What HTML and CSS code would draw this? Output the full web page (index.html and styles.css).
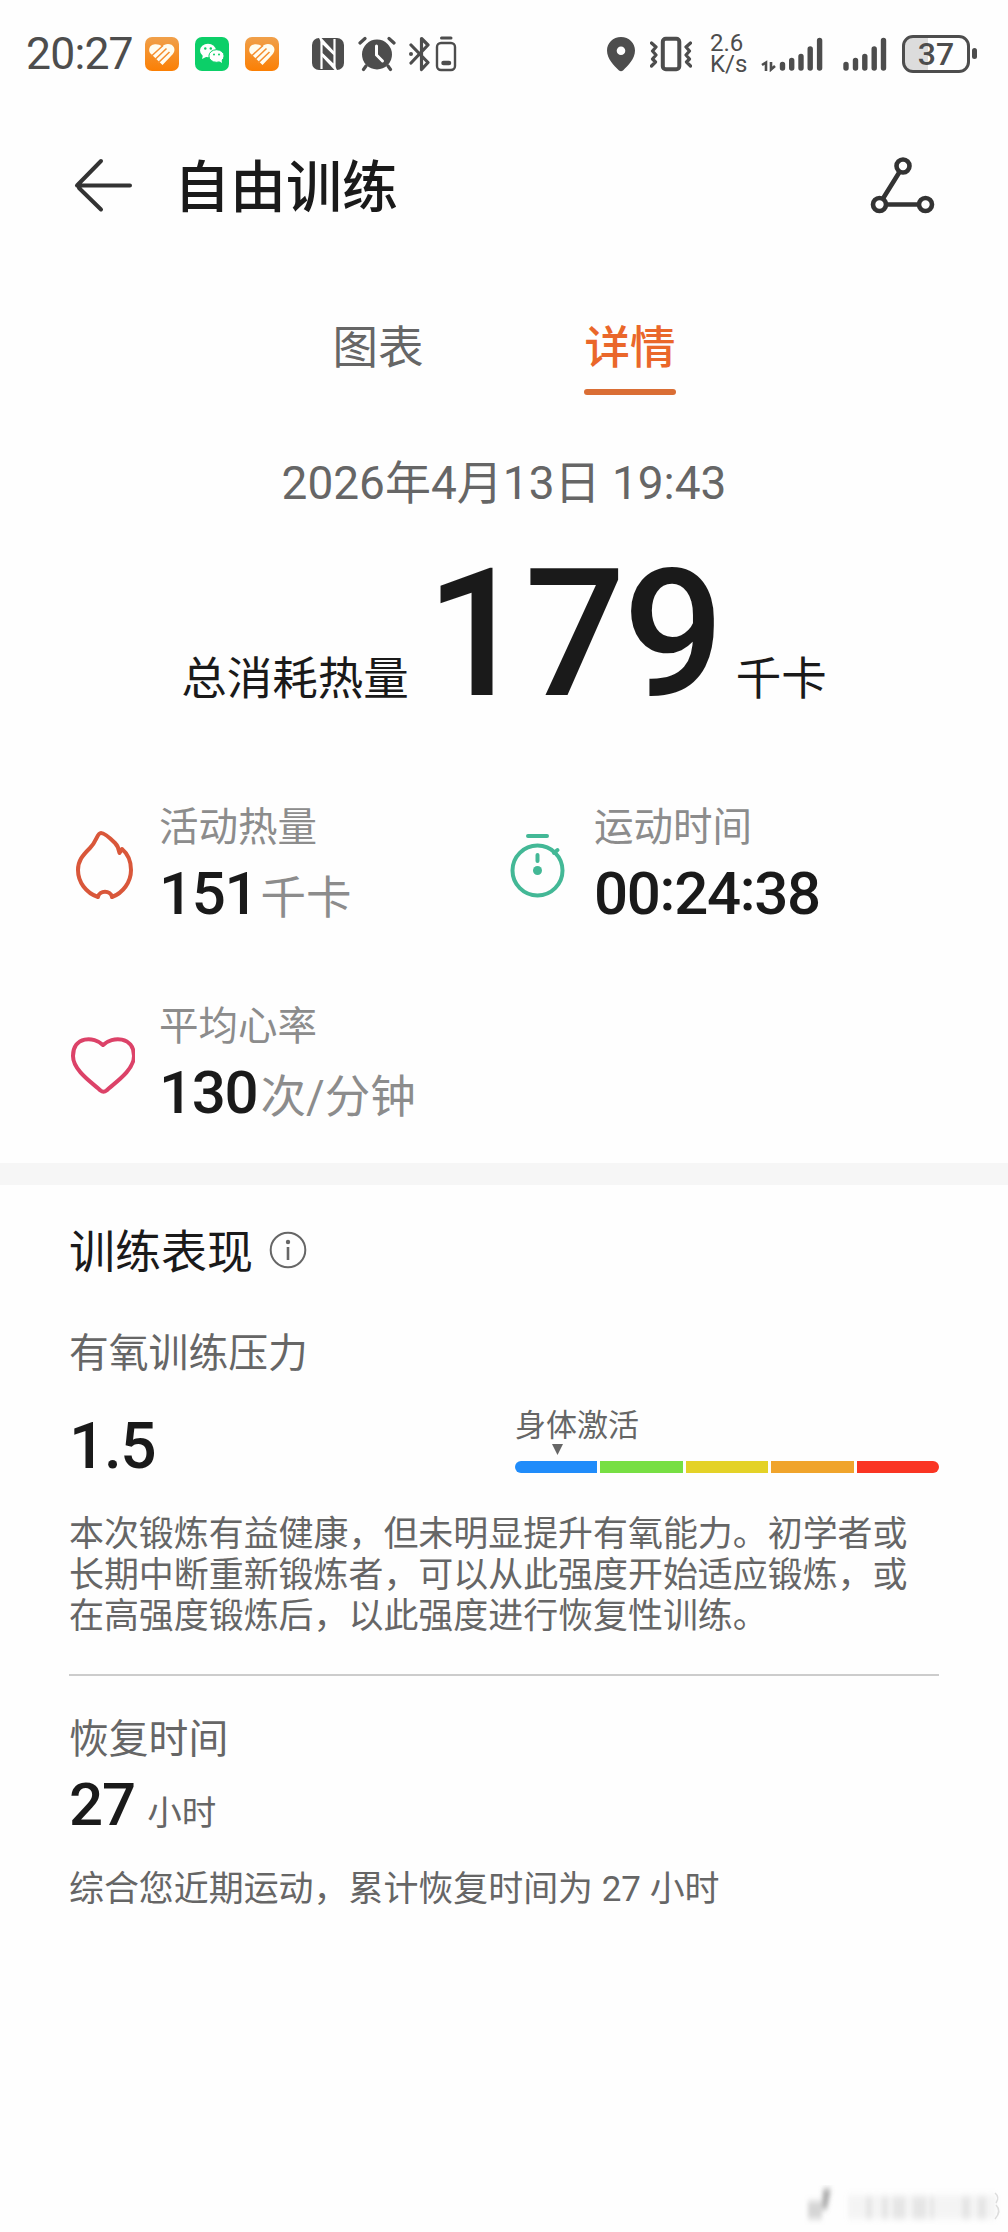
FILE: index.html
```
<!DOCTYPE html>
<html lang="zh-CN">
<head>
    <title>自由训练</title>
    <meta charset="utf-8">
    <link rel="stylesheet" href="styles.css">
</head>
<body>
<div class="statusbar">
    <div class="status-left">
        <span class="clock">20:27</span>
        <svg class="app-icon" width="34" height="34" viewBox="0 0 34 34">
            <defs><linearGradient id="orange" x1="0" y1="0" x2="0" y2="1"><stop offset="0" stop-color="#f0a04a"/><stop offset="1" stop-color="#fb7f04"/></linearGradient></defs>
            <rect width="34" height="34" rx="7" fill="url(#orange)"/>
            <path d="M17 9.500C20 6 27 6 29 10.500C30.500 14.500 28 17 26 19L17.500 28L5 16C3 12 5 8 9 7.500C12.500 7 15 8 17 9.500Z" fill="#fffdf0"/>
            <path d="M6 19.500L18 8.500M10 22.500L21.500 11.500M13 26L24.500 15" fill="none" stroke="#f59030" stroke-width="1.600"/>
        </svg>
        <svg class="app-icon" width="34" height="34" viewBox="0 0 34 34">
            <rect width="34" height="34" rx="7" fill="#0ccf68"/>
            <ellipse cx="13" cy="13.500" rx="8" ry="6.800" fill="#fff"/><path d="M8 18L7 22L12 19.500Z" fill="#fff"/>
            <ellipse cx="21.500" cy="19" rx="7.600" ry="6.300" fill="#fff" stroke="#0ccf68" stroke-width="1"/><path d="M24 24L27 26L26.500 22Z" fill="#fff"/>
            <g fill="#0ccf68"><circle cx="10.300" cy="11.500" r="1.200"/><circle cx="15.800" cy="11.500" r="1.200"/><circle cx="19" cy="17.500" r="1"/><circle cx="24" cy="17.500" r="1"/></g>
        </svg>
        <svg class="app-icon" width="34" height="34" viewBox="0 0 34 34">
            <rect width="34" height="34" rx="7" fill="url(#orange)"/>
            <path d="M17 9.500C20 6 27 6 29 10.500C30.500 14.500 28 17 26 19L17.500 28L5 16C3 12 5 8 9 7.500C12.500 7 15 8 17 9.500Z" fill="#fffdf0"/>
            <path d="M6 19.500L18 8.500M10 22.500L21.500 11.500M13 26L24.500 15" fill="none" stroke="#f59030" stroke-width="1.600"/>
        </svg>
        <!-- nfc -->
        <svg class="nfc" width="32" height="34" viewBox="0 0 32 34">
            <rect y="1" width="32" height="32" rx="7" fill="#4d4d4d"/>
            <path d="M9.500 32V5L22.500 17.500M22.500 2V29L9.500 16.500" fill="none" stroke="#fff" stroke-width="2.200"/>
            <path d="M7 1H9.500L22.500 15V18L9 5Z" fill="#fff"/>
            <path d="M25 33H22.500L9.500 19V16L23 29Z" fill="#fff"/>
        </svg>
        <svg class="alarm" width="38" height="36" viewBox="0 0 38 36">
            <circle cx="19" cy="18.500" r="15" fill="#4d4d4d"/>
            <g fill="none" stroke="#4d4d4d" stroke-width="3.200" stroke-linecap="round"><path d="M2 7L7 2.500M36 7L31 2.500M8 30L5.500 33.500M30 30L32.500 33.500"/></g>
            <path d="M18.500 10V19L24.500 25" fill="none" stroke="#fff" stroke-width="3" stroke-linecap="round"/>
        </svg>
        <svg class="bluetooth" width="48" height="36" viewBox="0 0 48 36">
            <g fill="none" stroke="#4d4d4d" stroke-width="3.200" stroke-linejoin="round" stroke-linecap="round">
                <path d="M2 9L19 26.500L12.500 33.500V2.500L19 9L2 27"/>
                <rect x="28" y="7" width="18" height="27" rx="4" stroke-width="2.400"/>
                <path d="M32.500 2H42" stroke-width="3"/>
                <path d="M34.500 27H40" stroke-width="4.500"/>
            </g>
            <circle cx="2" cy="18" r="2" fill="#4d4d4d"/>
        </svg>
    </div>
    <div class="status-right">
        <svg class="pin" width="30" height="36" viewBox="0 0 30 36"><path fill-rule="evenodd" d="M15 1C7 1 1 7 1 14.500C1 23 8 29.500 13 34.500Q15 36 17 34.500C22 29.500 29 23 29 14.500C29 7 23 1 15 1ZM15 10.500A4.300 4.300 0 1 1 15 19.100A4.300 4.300 0 1 1 15 10.500Z" fill="#4d4d4d"/></svg>
        <svg class="vibrate" width="42" height="36" viewBox="0 0 42 36">
            <g fill="none" stroke="#4d4d4d" stroke-linecap="round" stroke-linejoin="round"><rect x="12.800" y="2.800" width="16.500" height="30.500" rx="3" stroke-width="4"/>
            <path d="M1.500 7L6 11L2.500 15L6 19L2.500 23L5.500 26L1.500 30M40.500 7L36 11L39.500 15L36 19L39.500 23L36.500 26L40.500 30" stroke-width="3.200"/></g>
        </svg>
        <div class="speed"><span>2.6</span><span>K/s</span></div>
        <svg class="signal" width="62" height="36" viewBox="0 0 62 36">
            <g stroke="#4d4d4d" stroke-width="5.400" stroke-linecap="round"><path d="M21.500 28.500V32M30.700 24.500V32M40 20.500V32M49.200 13V32M58.600 4.500V32"/></g>
            <g fill="none" stroke="#4d4d4d" stroke-width="2.600"><path d="M1 29L5 26.500V35M10 26V33.500L14 30"/></g>
        </svg>
        <svg class="signal2" width="44" height="36" viewBox="0 0 44 36">
            <g stroke="#4d4d4d" stroke-width="5.400" stroke-linecap="round"><path d="M3 28.500V32M12.500 24.500V32M21.800 20.500V32M31.200 13V32M40.500 4.500V32"/></g>
        </svg>
        <div class="battery"><span>37</span></div>
        <div class="battery-tip"></div>
    </div>
</div>

<div class="header">
    <svg width="58" height="56" viewBox="0 0 58 56"><g fill="none" stroke="#333" stroke-width="4" stroke-linecap="round" stroke-linejoin="round"><path d="M27 4L3 28.500H56M5 31L27 52.500"/></g></svg>
    <h1>自由训练</h1>
    <svg class="share" width="66" height="60" viewBox="0 0 66 60"><g fill="none" stroke="#333" stroke-width="4.600"><circle cx="33" cy="11" r="6.500"/><circle cx="9.500" cy="49.500" r="6.500"/><circle cx="55.500" cy="49.500" r="6.500"/><path d="M29.500 17L13 43.500M16.500 49.500H48.500"/></g></svg>
</div>

<div class="tabs">
    <div class="tab">图表</div>
    <div class="tab active">详情</div>
</div>

<div class="date">2026年4月13日 19:43</div>

<div class="total">
    <span>总消耗热量</span>
    <strong>179</strong>
    <span>千卡</span>
</div>

<div class="stats">
    <div class="stat">
        <svg width="66" height="70" viewBox="0 0 66 70"><path d="M29 68C17 64 9 53 9 41C9 32 13 27 21 19C28 12 28 4 32 4C35 4 42 10 46 14C49 17 50 20 50.500 24L53 20C59 25 62 33 62 41C62 53 54 64 43 68C42 61 30 61 29 68Z" fill="none" stroke="#d9573a" stroke-width="4" stroke-linejoin="round"/></svg>
        <div>
            <div class="label">活动热量</div>
            <div class="value">151<span class="unit">千卡</span></div>
        </div>
    </div>
    <div class="stat">
        <svg width="66" height="70" viewBox="0 0 66 70"><g fill="none" stroke="#43b896" stroke-width="4" stroke-linecap="round"><circle cx="33.500" cy="41.500" r="25"/><path d="M24 7H43M50 24L53.500 21M33.500 26V32"/></g><circle cx="33.500" cy="41.500" r="4.500" fill="#43b896"/></svg>
        <div>
            <div class="label">运动时间</div>
            <div class="value time">00<i>:</i>24<i>:</i>38</div>
        </div>
    </div>
    <div class="stat">
        <svg width="66" height="70" viewBox="0 0 66 70"><path d="M34 17C25 8 4 8 4 28C4 43 25 56 31.500 62.500Q34.500 65 37.500 62.500C44 56 65 43 65 28C65 8 43 8 34 17Z" fill="none" stroke="#dc4268" stroke-width="4" stroke-linejoin="round"/></svg>
        <div>
            <div class="label">平均心率</div>
            <div class="value">130<span class="unit">次/分钟</span></div>
        </div>
    </div>
</div>

<div class="performance">
    <h2>训练表现 <svg width="38" height="38" viewBox="0 0 38 38"><circle cx="19" cy="19" r="17.300" fill="none" stroke="#666" stroke-width="2"/><circle cx="19" cy="11" r="2.200" fill="#666"/><path d="M19 16V29" stroke="#666" stroke-width="2.600"/></svg></h2>
    <h3>有氧训练压力</h3>
    <div class="stress">
        <div class="score">1.5</div>
        <div class="gauge">
            <div class="gauge-label">身体激活</div>
            <div class="marker"></div>
            <div class="bar">
                <div class="blue"></div>
                <div class="green"></div>
                <div class="yellow"></div>
                <div class="orange"></div>
                <div class="red"></div>
            </div>
        </div>
    </div>
    <p class="advice">本次锻炼有益健康，但未明显提升有氧能力。初学者或<br>长期中断重新锻炼者，可以从此强度开始适应锻炼，或<br>在高强度锻炼后，以此强度进行恢复性训练。</p>
    <h3 class="recovery">恢复时间</h3>
    <div class="hours">27<span>小时</span></div>
    <p class="summary">综合您近期运动，累计恢复时间为 27 小时</p>
</div>

<svg class="smudge" width="204" height="44" viewBox="0 0 204 44">
    <defs><filter id="soft" x="-20%" y="-20%" width="140%" height="140%"><feGaussianBlur stdDeviation="2.200 3"/></filter></defs>
    <g filter="url(#soft)">
        <path d="M4 16H18V34H4Z" fill="#999" opacity=".4"/>
        <path d="M19 4H27L23 24H18Z" fill="#777" opacity=".6"/>
        <path d="M44 10H192V34H44Z" fill="#ccc" opacity=".2"/>
        <path d="M62 12H68V34H62ZM78 12H84V34H78ZM89 12H101V34H89ZM109 12H122V34H109ZM126 12H130V34H126ZM158 12H166V34H158ZM174 12H182V34H174Z" fill="#bbb" opacity=".25"/>
    </g>
    <path d="M191 8Q196 12 192 18M192 20Q198 26 191 34" fill="none" stroke="#ddd" stroke-width="1.500"/>
</svg>
</body>
</html>
```
FILE: styles.css
```
/* Reset */

* { margin: 0; padding: 0; box-sizing: border-box; }

body {
	position: relative;
	width: 1008px;
	height: 2232px;
	overflow: hidden;
	background-color: #fefefe;
	color: #1a1a1a;
	font-family: Roboto, "Noto Sans CJK SC", sans-serif;
}

svg { display: block; flex: none; }

h1, h2, h3 { font-weight: normal; }

i { font-style: normal; }


/* Status bar */

.statusbar {
	display: flex;
	justify-content: space-between;
	height: 107px;
	padding: 0 31px 0 26px;
	color: #4d4d4d;
}

.status-left, .status-right {
	display: flex;
	align-items: center;
}

.clock {
	width: 119px;
	font-size: 44.5px;
	letter-spacing: -0.8px;
}

.app-icon { margin-right: 16px; }
.nfc { margin-left: 17px; }
.alarm { margin-left: 14px; }
.bluetooth { margin-left: 13px; }

.vibrate { margin-left: 14px; }

.speed {
	display: flex;
	flex-direction: column;
	width: 36px;
	margin-left: 18px;
	font-size: 24px;
	line-height: 21px;
}

.signal { margin-left: 15px; }
.signal2 { margin-left: 20px; }

.battery {
	width: 68px;
	height: 38px;
	margin-left: 15px;
	border: 3px solid #4d4d4d;
	border-radius: 11px;
	background: linear-gradient(90deg, #dcdcdc 37%, #fefefe 37%);
	font-size: 32px;
	font-weight: 500;
	line-height: 33px;
	text-align: center;
}

.battery-tip {
	width: 5px;
	height: 11px;
	margin-left: 2px;
	border-radius: 3px;
	background: #4d4d4d;
}


/* Header */

.header {
	display: flex;
	align-items: center;
	height: 156px;
	padding: 0 72px 0 74px;
}

.header h1 {
	margin-left: 42px;
	padding-top: 5px;
	font-size: 56px;
	font-weight: 500;
	line-height: 80px;
}

.share { margin-left: auto; }


/* Tabs */

.tabs {
	display: flex;
	justify-content: center;
	gap: 160px;
	padding-top: 56px;
}

.tab {
	width: 92px;
	height: 76px;
	font-size: 45.5px;
	line-height: 60px;
	text-align: center;
	color: #666;
}

.tab.active {
	font-weight: 500;
	color: #ea672a;
}

.tab.active:after {
	content: "";
	display: block;
	height: 6px;
	margin-top: 10px;
	border-radius: 3px;
	background: #da6e35;
}


/* Totals */

.date {
	margin-top: 58px;
	font-size: 46px;
	line-height: 60px;
	text-align: center;
	color: #666;
}

.total {
	display: flex;
	justify-content: center;
	align-items: baseline;
	margin-top: 32px;
	font-size: 45.5px;
	line-height: 60px;
}

.total strong {
	margin: 0 14px 0 17px;
	font-size: 178px;
	font-weight: 500;
	line-height: 178px;
	letter-spacing: -2.5px;
}


/* Stats */

.stats {
	display: grid;
	grid-template-columns: 435px 435px;
	row-gap: 74px;
	padding: 80px 69px 36px;
}

.stat {
	display: flex;
	align-items: center;
	gap: 24px;
	height: 125px;
}

.stat svg { margin-bottom: 4px; }

.label {
	margin-bottom: 6px;
	font-size: 39.5px;
	line-height: 50px;
	color: #8c8c8c;
}

.value {
	font-size: 60px;
	font-weight: 500;
	line-height: 70px;
	letter-spacing: -1.3px;
	white-space: nowrap;
}

.unit {
	margin-left: 3px;
	font-size: 45.5px;
	font-weight: 400;
	line-height: 1;
	letter-spacing: 0;
	color: #8c8c8c;
}

.time i { vertical-align: 4px; line-height: 1; }


/* Performance */

.performance {
	padding: 37px 69px 0;
	border-top: 22px solid #f6f6f6;
	color: #666;
}

h2 {
	display: flex;
	align-items: center;
	gap: 16px;
	font-size: 46px;
	line-height: 60px;
	color: #1a1a1a;
}

h2 svg { margin-bottom: 4px; }

h3 {
	margin-top: 47px;
	font-size: 39.8px;
	line-height: 50px;
}

.stress {
	display: flex;
	justify-content: space-between;
	margin-top: 25px;
	height: 93px;
}

.score {
	margin-top: 1px;
	font-size: 64px;
	font-weight: 500;
	line-height: 84px;
	letter-spacing: -1.5px;
	color: #1a1a1a;
}

.gauge { width: 424px; }

.gauge-label {
	padding-top: 2px;
	font-size: 31px;
	line-height: 40px;
}

.marker {
	width: 11px;
	height: 11px;
	margin: -2px 0 6px 37px;
	background: #666;
	clip-path: polygon(0 0, 100% 0, 50% 100%);
}

.bar {
	display: flex;
	gap: 3px;
	height: 12px;
	border-radius: 6px;
	overflow: hidden;
}

.bar div { flex: 1; }

.blue { background: #208cfa; }
.green { background: #77df43; }
.yellow { background: #e4d227; }
.orange { background: #f0a42c; }
.red { background: #fa3523; }

.advice {
	height: 179px;
	padding-top: 17px;
	font-size: 34.95px;
	line-height: 41px;
	white-space: nowrap;
	border-bottom: 2px solid #ccc;
}

.recovery { margin-top: 39px; }

.hours {
	font-size: 60px;
	font-weight: 500;
	line-height: 80px;
	letter-spacing: -1px;
	color: #1a1a1a;
}

.hours span {
	margin-left: 12px;
	font-size: 34.5px;
	font-weight: 400;
	line-height: 1;
	letter-spacing: 0;
	color: #666;
}

.summary {
	margin-top: 20px;
	font-size: 34.95px;
	line-height: 50px;
}


/* Faded mark in the corner */

.smudge {
	position: absolute;
	right: 0;
	bottom: 3px;
}
```
